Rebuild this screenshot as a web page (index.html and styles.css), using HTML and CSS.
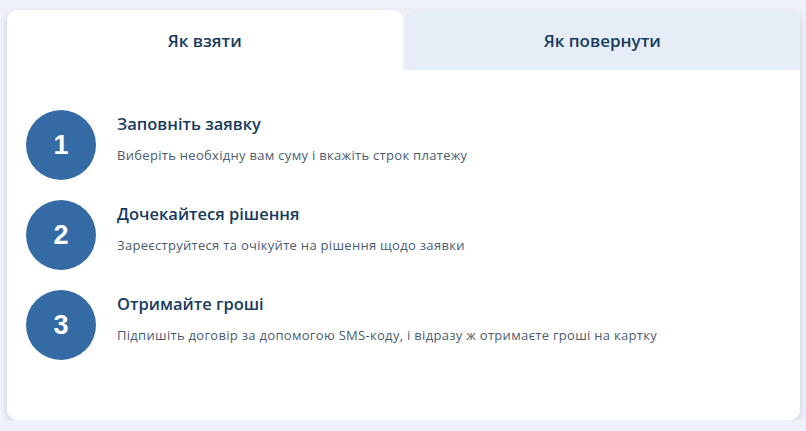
FILE: index.html
```html
<!DOCTYPE html>
<html lang="uk">
<head>
<meta charset="utf-8">
<link rel="stylesheet" href="styles.css">
</head>
<body>
<div class="card">
  <div class="tabs">
    <div class="tab active">Як взяти</div>
    <div class="tab">Як повернути</div>
  </div>
  <div class="panel">
    <div class="step">
      <div class="num">1</div>
      <div class="text">
        <div class="title">Заповніть заявку</div>
        <div class="desc">Виберіть необхідну вам суму і вкажіть строк платежу</div>
      </div>
    </div>
    <div class="step">
      <div class="num">2</div>
      <div class="text">
        <div class="title">Дочекайтеся рішення</div>
        <div class="desc">Зареєструйтеся та очікуйте на рішення щодо заявки</div>
      </div>
    </div>
    <div class="step">
      <div class="num">3</div>
      <div class="text">
        <div class="title">Отримайте гроші</div>
        <div class="desc">Підпишіть договір за допомогою SMS-коду, і відразу ж отримаєте гроші на картку</div>
      </div>
    </div>
  </div>
</div>
</body>
</html>
```

FILE: styles.css
```css
html, body {
  margin: 0;
  padding: 0;
  background: #eef1f8;
}
body {
  padding: 10px 6px 0 7px;
  font-family: "Open Sans", "Noto Sans", sans-serif;
}
.card {
  width: 793px;
  border-radius: 10px;
  box-shadow: 0 3px 6px rgba(150, 160, 205, 0.45);
}
.tabs {
  display: flex;
  gap: 2px;
  height: 60px;
}
.tab {
  flex: 1;
  display: flex;
  align-items: center;
  justify-content: center;
  background: #e6edf6;
  border-radius: 10px 10px 0 0;
  color: #183b5e;
  font-size: 17px;
  font-weight: 600;
  padding-top: 1px;
}
.tab.active {
  background: #ffffff;
}
.panel {
  background: #ffffff;
  border-radius: 0 0 10px 10px;
  height: 350px;
  box-sizing: border-box;
  padding: 40px 20px 0 19px;
  display: flex;
  flex-direction: column;
  gap: 20px;
}
.step {
  display: flex;
  gap: 21px;
  height: 70px;
}
.num {
  width: 70px;
  height: 70px;
  flex: none;
  border-radius: 50%;
  background: #346ba5;
  color: #ffffff;
  display: flex;
  align-items: center;
  justify-content: center;
  font-family: "Liberation Sans", Arial, sans-serif;
  font-weight: 700;
  font-size: 27px;
}
.text {
  padding-top: 2px;
}
.title {
  color: #183b5e;
  font-size: 16.5px;
  font-weight: 600;
  line-height: 24px;
}
.desc {
  margin-top: 10px;
  color: #4b5b72;
  font-size: 13px;
  letter-spacing: 0.3px;
  line-height: 18px;
}
```
